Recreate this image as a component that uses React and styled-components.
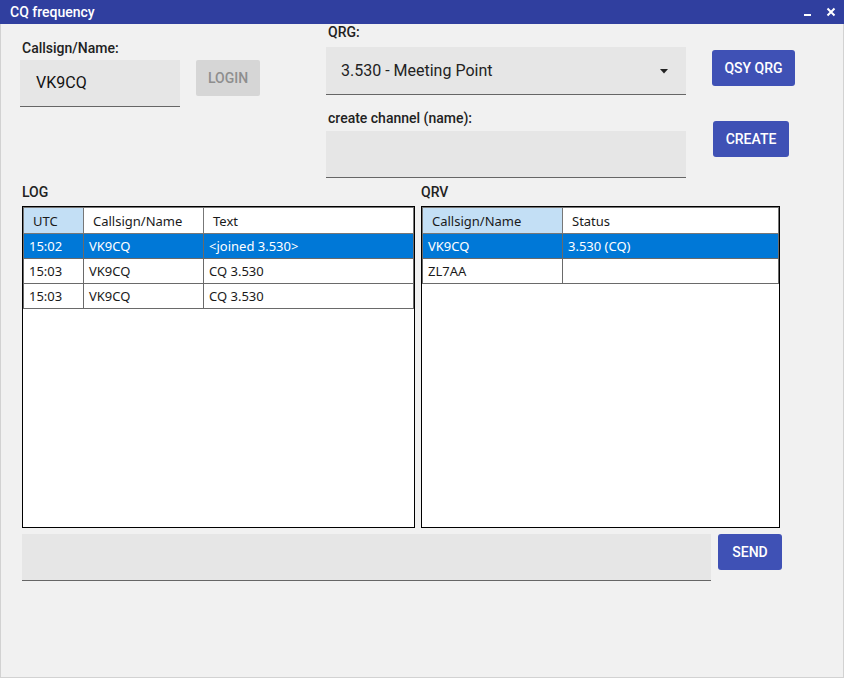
import React from "react";
import styled, { createGlobalStyle } from "styled-components";

const GlobalStyle = createGlobalStyle`
    html, body {
        margin: 0;
        padding: 0;
        background: #f1f1f1;
    }
    * {
        box-sizing: border-box;
    }
`

const logRows = [
    { id: 1, utc: "15:02", call: "VK9CQ", text: "<joined 3.530>", selected: true },
    { id: 2, utc: "15:03", call: "VK9CQ", text: "CQ 3.530" },
    { id: 3, utc: "15:03", call: "VK9CQ", text: "CQ 3.530" },
]

const qrvRows = [
    { id: 1, call: "VK9CQ", status: "3.530 (CQ)", selected: true },
    { id: 2, call: "ZL7AA", status: "" },
]

const App = () => {
    return (
        <Window>
            <GlobalStyle />
            <TitleBar>
                <Title>CQ frequency</Title>
                <WindowControls>
                    <ControlButton aria-label="minimize">
                        <svg width="10" height="10" viewBox="0 0 10 10">
                            <rect x="1" y="7" width="7" height="2" fill="#fff" />
                        </svg>
                    </ControlButton>
                    <ControlButton aria-label="close">
                        <svg width="10" height="10" viewBox="0 0 10 10">
                            <path d="M1.5 1.5 L8.5 8.5 M8.5 1.5 L1.5 8.5" stroke="#fff" strokeWidth="2" />
                        </svg>
                    </ControlButton>
                </WindowControls>
            </TitleBar>

            <Content>
                <TopArea>
                    <LoginGroup>
                        <FieldLabel>Callsign/Name:</FieldLabel>
                        <TextField width={160}>VK9CQ</TextField>
                    </LoginGroup>
                    <LoginButton disabled>LOGIN</LoginButton>

                    <ChannelGroup>
                        <FieldLabel>QRG:</FieldLabel>
                        <SelectField>
                            <span>3.530 - Meeting Point</span>
                            <svg width="8" height="5" viewBox="0 0 8 5">
                                <path d="M0 0 H8 L4 4.5 Z" fill="#222" />
                            </svg>
                        </SelectField>
                        <FieldLabel $spaced>create channel (name):</FieldLabel>
                        <TextField width={360} />
                    </ChannelGroup>

                    <ButtonColumn>
                        <ActionButton $w={83}>QSY QRG</ActionButton>
                        <ActionButton $w={76} $top={35} $shift={1}>CREATE</ActionButton>
                    </ButtonColumn>
                </TopArea>

                <Tables>
                    <Panel $w={393}>
                        <PanelLabel>LOG</PanelLabel>
                        <TableFrame>
                            <Grid>
                                <colgroup>
                                    <col style={{ width: 60 }} />
                                    <col style={{ width: 120 }} />
                                    <col />
                                </colgroup>
                                <thead>
                                    <tr>
                                        <HeadCell $sorted>UTC</HeadCell>
                                        <HeadCell>Callsign/Name</HeadCell>
                                        <HeadCell>Text</HeadCell>
                                    </tr>
                                </thead>
                                <tbody>
                                    {logRows.map(({ id, utc, call, text, selected }) => (
                                        <Row key={id} $selected={selected}>
                                            <Cell>{utc}</Cell>
                                            <Cell>{call}</Cell>
                                            <Cell>{text}</Cell>
                                        </Row>
                                    ))}
                                </tbody>
                            </Grid>
                        </TableFrame>
                    </Panel>

                    <Panel $w={359}>
                        <PanelLabel>QRV</PanelLabel>
                        <TableFrame>
                            <Grid>
                                <colgroup>
                                    <col style={{ width: 140 }} />
                                    <col />
                                </colgroup>
                                <thead>
                                    <tr>
                                        <HeadCell $sorted>Callsign/Name</HeadCell>
                                        <HeadCell>Status</HeadCell>
                                    </tr>
                                </thead>
                                <tbody>
                                    {qrvRows.map(({ id, call, status, selected }) => (
                                        <Row key={id} $selected={selected}>
                                            <Cell>{call}</Cell>
                                            <Cell>{status}</Cell>
                                        </Row>
                                    ))}
                                </tbody>
                            </Grid>
                        </TableFrame>
                    </Panel>
                </Tables>

                <BottomRow>
                    <TextField width={689} />
                    <ActionButton $w={64} $shift={7}>SEND</ActionButton>
                </BottomRow>
            </Content>
        </Window>
    )
}

export default App;

const Window = styled.div`
    width: 844px;
    height: 678px;
    background: #f1f1f1;
    border: 1px solid #d2d2d2;
    border-top: none;
    display: flex;
    flex-direction: column;
    font-family: Roboto, "Liberation Sans", sans-serif;
    color: #222;
`

const TitleBar = styled.div`
    height: 24px;
    margin: 0 -1px;
    background: #303f9f;
    display: flex;
    align-items: center;
    justify-content: space-between;
    padding: 0 8px 0 10px;
`

const Title = styled.div`
    color: #fff;
    font-size: 14px;
    font-weight: 500;
`

const WindowControls = styled.div`
    display: flex;
    gap: 13px;
    align-items: center;
`

const ControlButton = styled.span`
    display: flex;
    width: 10px;
    height: 10px;
`

const Content = styled.div`
    padding-left: 21px;
    display: flex;
    flex-direction: column;
`

const TopArea = styled.div`
    display: flex;
    align-items: flex-start;
    height: 154px;
`

const FieldLabel = styled.div`
    font-size: 14px;
    font-weight: 500;
    line-height: 16px;
    height: 16px;
    padding-left: 2px;
    margin-top: ${p => (p.$spaced ? "15px" : "0")};
    margin-bottom: ${p => (p.$spaced ? "5px" : "0")};
    white-space: nowrap;
`

const LoginGroup = styled.div`
    margin-left: -2px;
    margin-top: 16px;
    display: flex;
    flex-direction: column;
    gap: 4px;
`

const TextField = styled.div`
    width: ${p => p.width}px;
    height: 47px;
    background: #e6e6e6;
    border-bottom: 1px solid #666;
    font-size: 16px;
    line-height: 46px;
    padding-left: 16px;
    color: #111;
`

const LoginButton = styled.button`
    margin-left: 16px;
    margin-top: 36px;
    width: 64px;
    height: 36px;
    border: none;
    border-radius: 2px;
    background: #d6d6d6;
    color: #8e8e8e;
    font-family: Roboto, "Liberation Sans", sans-serif;
    font-size: 14px;
    font-weight: 500;
    padding: 0;
`

const ChannelGroup = styled.div`
    margin-left: 66px;
    display: flex;
    flex-direction: column;

    & > ${FieldLabel}:first-child {
        margin-bottom: 7px;
    }
`

const SelectField = styled.div`
    width: 360px;
    height: 48px;
    background: #e6e6e6;
    border-bottom: 1px solid #666;
    display: flex;
    align-items: center;
    justify-content: space-between;
    padding: 0 18px 0 15px;
    font-size: 16px;
    color: #222;

    svg {
        margin-top: 2px;
    }
`

const ButtonColumn = styled.div`
    margin-left: 26px;
    margin-top: 26px;
    display: flex;
    flex-direction: column;
    align-items: flex-start;
`

const ActionButton = styled.button`
    width: ${p => p.$w}px;
    height: 36px;
    margin-top: ${p => p.$top || 0}px;
    margin-left: ${p => p.$shift || 0}px;
    border: none;
    border-radius: 3px;
    background: #3f51b5;
    color: #fff;
    font-family: Roboto, "Liberation Sans", sans-serif;
    font-size: 14px;
    font-weight: 500;
    padding: 0;
    flex-shrink: 0;
`

const Tables = styled.div`
    display: flex;
    gap: 6px;
    margin-top: 6px;
`

const Panel = styled.div`
    width: ${p => p.$w}px;
    display: flex;
    flex-direction: column;
`

const PanelLabel = styled.div`
    font-size: 14px;
    font-weight: 500;
    line-height: 16px;
    height: 16px;
    margin-bottom: 6px;
`

const TableFrame = styled.div`
    height: 322px;
    background: #fff;
    border: 1px solid #000;
    overflow: hidden;
`

const Grid = styled.table`
    width: 100%;
    border-collapse: collapse;
    table-layout: fixed;
    font-family: "Noto Sans", "Open Sans", sans-serif;
    font-size: 13px;
    color: #1a1a1a;
`

const HeadCell = styled.th`
    height: 26px;
    border: 1px solid #777;
    background: ${p => (p.$sorted ? "#c3dff5" : "#fff")};
    font-weight: 400;
    text-align: left;
    padding: 0 0 0 9px;
    white-space: nowrap;
`

const Row = styled.tr`
    background: ${p => (p.$selected ? "#0078d7" : "#fff")};
    color: ${p => (p.$selected ? "#fff" : "#1a1a1a")};
`

const Cell = styled.td`
    height: 25px;
    border: 1px solid #6a6a6a;
    padding: 0 0 0 5px;
    white-space: nowrap;
`

const BottomRow = styled.div`
    display: flex;
    align-items: flex-start;
    margin-top: 6px;
`
